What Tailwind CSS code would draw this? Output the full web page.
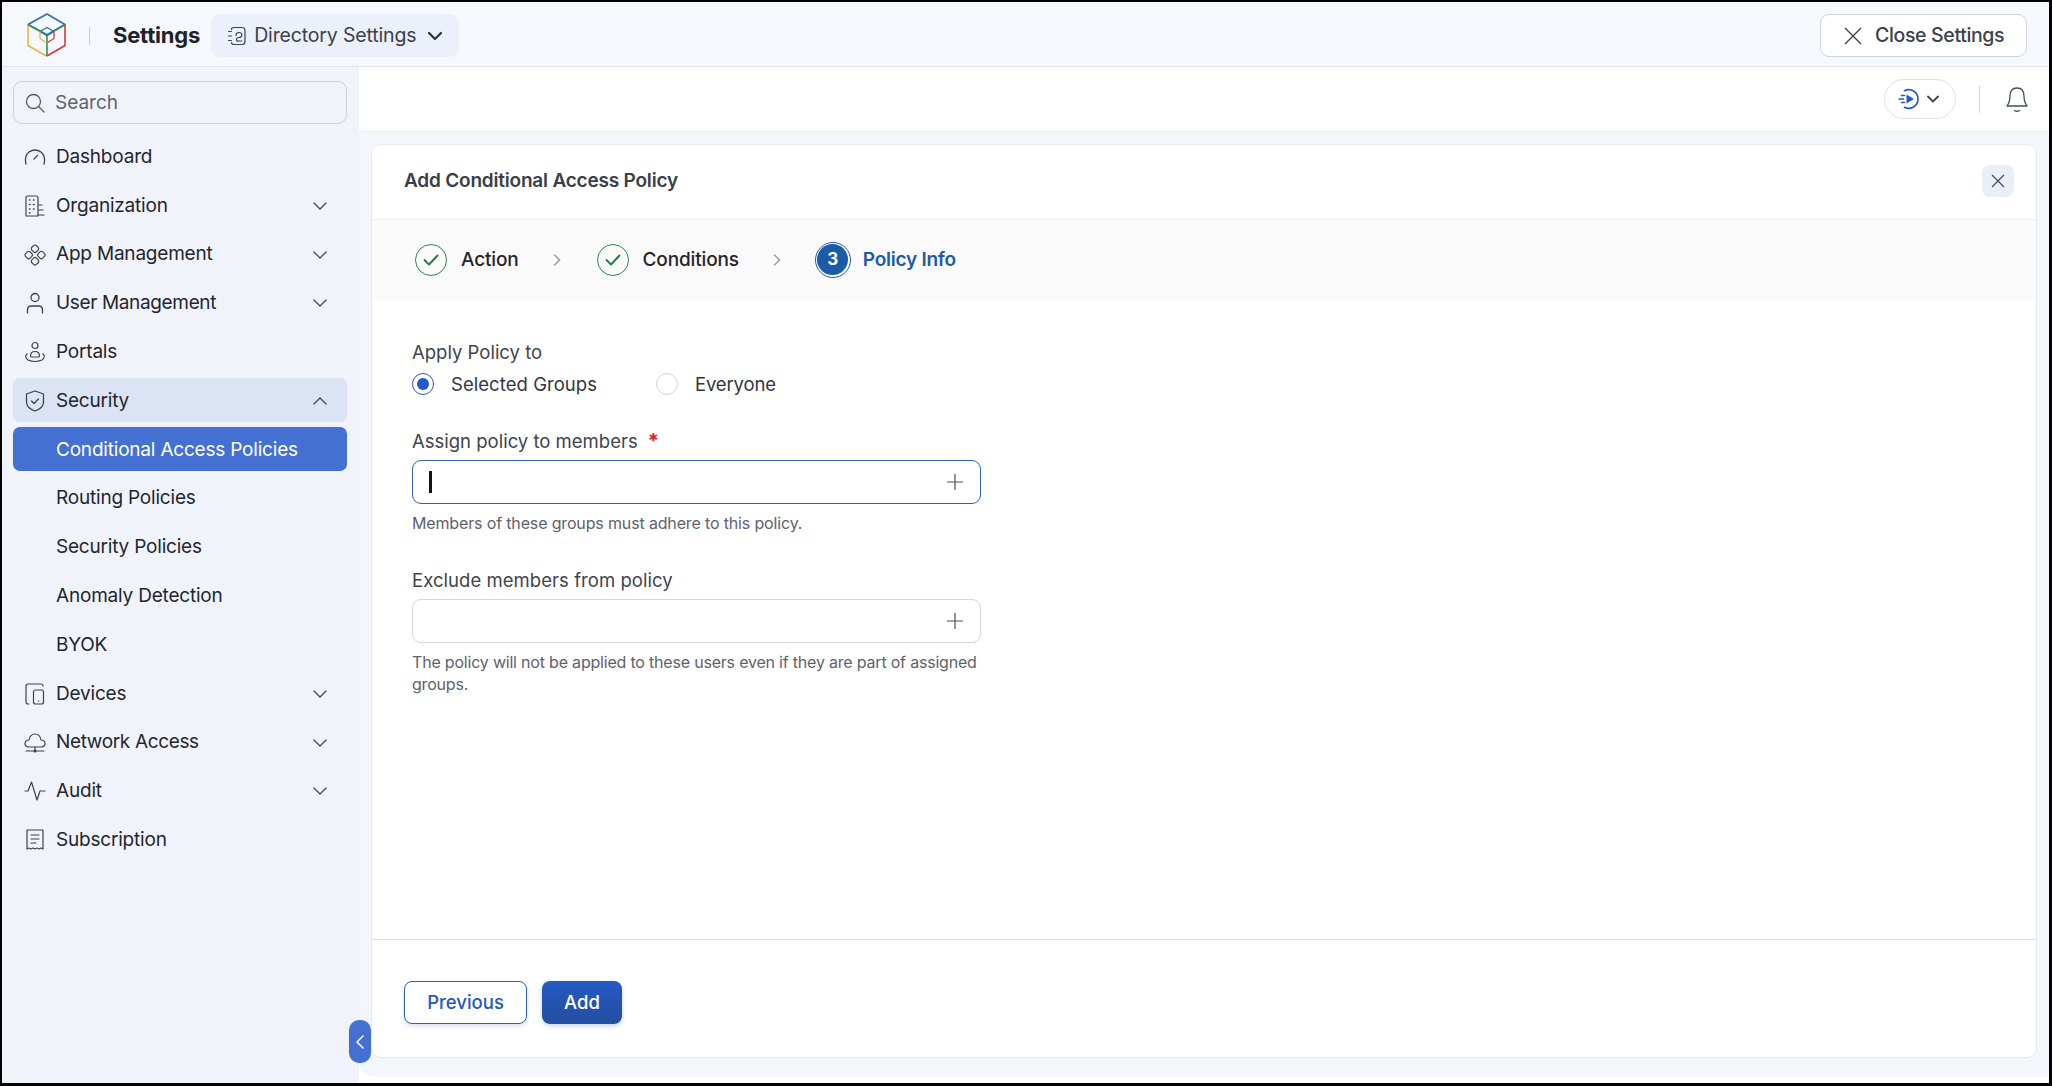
<!DOCTYPE html>
<html>
<head>
<meta charset="utf-8">
<script src="https://cdn.jsdelivr.net/npm/@tailwindcss/browser@4"></script>
</head>
<body class="m-0 overflow-hidden bg-white">
<div class="w-[2052px] h-[1086px] border-t-2 border-l-2 border-r-[3px] border-b-[3px] border-black flex flex-col font-['Inter',sans-serif] text-[#23262e] overflow-hidden relative">

  <!-- header -->
  <header class="h-[65px] shrink-0 bg-[#f5f8fc] border-b border-[#dfe3ea] flex items-center pl-[25px] pr-[22px] pt-[3px]">
    <svg class="w-[40px] h-[44px] shrink-0 -mt-[1px]" viewBox="0 0 40 44" fill="none" stroke-width="1.6" stroke-linejoin="round">
      <path d="M1 11.5 20 1l18 10.5-18 10.5z" stroke="#2f6db5"/>
      <path d="M1 11.5v21L19.5 43" stroke="#eeb244"/>
      <path d="M38 11.5v21L20 43" stroke="#d93a3a"/>
      <path d="M1 11.5 20 22l18-10.5M20 22v21" stroke="#2e9550"/>
      <path d="M13 18.5 20 14.5l7 4-7 4z" stroke="#2f6db5" stroke-width="1.3"/>
      <path d="M13 18.5v7l6.5 4" stroke="#eeb244" stroke-width="1.3"/>
      <path d="M27 18.5v7l-6.5 4" stroke="#d93a3a" stroke-width="1.3"/>
    </svg>
    <div class="w-px h-[18px] bg-[#c9ced6] ml-[22px]"></div>
    <span class="ml-[23px] text-[22px] font-bold text-[#1f2229] tracking-[-0.2px]">Settings</span>
    <div class="ml-[11px] w-[248px] h-[43px] rounded-[9px] bg-[#ebf0fa] flex items-center pl-[16px]">
      <svg class="w-[20px] h-[20px] shrink-0" viewBox="0 0 20 20" fill="none" stroke="#3e434d" stroke-width="1.2" stroke-linecap="round">
        <path d="M4.5 3.5Q4.5 1.5 7 1.5h8q3 0 3 3v11q0 3-3 3H7q-2.500 0-2.500-2"/>
        <path d="M1.500 5.500h3M1.500 10h3M1.500 14.500h3"/>
        <path d="M9 9.500q0-3 3-3t2.800 2.500q0 2.500-3 2.500-2.300 0-2.300 2t2.300 1.500h3"/>
      </svg>
      <span class="ml-[7px] text-[19.500px] text-[#3c414b] tracking-[-0.15px]">Directory Settings</span>
      <svg class="ml-[11px] w-[16px] h-[10px]" viewBox="0 0 16 10" fill="none" stroke="#2e323a" stroke-width="2.200" stroke-linecap="round" stroke-linejoin="round"><path d="M2 2l6 6 6-6"/></svg>
    </div>
    <button class="ml-auto w-[207px] h-[43px] bg-white border border-[#cfd3da] rounded-[9px] flex items-center pl-[23px]">
      <svg class="w-[18px] h-[18px]" viewBox="0 0 18 18" fill="none" stroke="#3a3e46" stroke-width="1.300"><path d="M1 1l16 16M17 1 1 17"/></svg>
      <span class="ml-[13px] text-[19.500px] font-medium text-[#3c414b] tracking-[-0.35px]">Close Settings</span>
    </button>
  </header>

  <div class="flex-1 flex min-h-0 relative">
    <!-- sidebar -->
    <aside class="w-[357px] shrink-0 bg-[#f1f3fa] pl-[11px] pr-[12px] pt-[14px]">
      <div class="h-[43px] rounded-[9px] border border-[#cdd1d9] flex items-center pl-[11px]">
        <svg class="w-[20px] h-[20px]" viewBox="0 0 20 20" fill="none" stroke="#555a64" stroke-width="1.300" stroke-linecap="round"><circle cx="8.500" cy="8.500" r="7"/><path d="M13.800 13.800 19 19"/></svg>
        <span class="ml-[10px] text-[19px] text-[#5f646e] pt-[2px]">Search</span>
      </div>
      <nav class="mt-[10px] flex flex-col gap-[4.800px] text-[19px] tracking-[-0.2px]">
        <a class="h-[44px] flex items-center pl-[11px] pt-[2px]"><svg class="w-[22px] h-[20px] shrink-0" viewBox="0 0 22 20" fill="none" stroke="#3e434d" stroke-width="1.300" stroke-linecap="round"><path d="M2 17Q0 9 5 5q6-4 12 0 5 4 3 12"/><path d="M10 12l3.500-3.500"/></svg><span class="ml-[10px]">Dashboard</span></a>
        <a class="h-[44px] flex items-center pl-[11px] pt-[2px]"><svg class="w-[22px] h-[22px] shrink-0" viewBox="0 0 22 22" fill="none" stroke="#3e434d" stroke-width="1.200" stroke-linecap="round"><path d="M2 21V3q0-2 2-2h8q2 0 2 2v18H3M14 10h4M14 15h5M14 20h6"/><path d="M5.500 5h.5M9.500 5h.5M5.500 9.500h.5M9.500 9.500h.5M5.500 14h.5M9.500 14h.5M5.500 18h.5" stroke-width="1.600"/></svg><span class="ml-[10px]">Organization</span><svg class="ml-auto mr-[20px] w-[14px] h-[8px]" viewBox="0 0 14 8" fill="none" stroke="#43474f" stroke-width="1.300" stroke-linecap="round"><path d="M1 1l6 6 6-6"/></svg></a>
        <a class="h-[44px] flex items-center pl-[11px] pt-[2px]"><svg class="w-[22px] h-[22px] shrink-0" viewBox="0 0 22 22" fill="none" stroke="#3e434d" stroke-width="1.200"><rect x="7.800" y="1.500" width="6.400" height="6.400" rx="2" transform="rotate(45 11 4.700)"/><rect x="7.800" y="14.100" width="6.400" height="6.400" rx="2" transform="rotate(45 11 17.300)"/><rect x="1.500" y="7.800" width="6.400" height="6.400" rx="2" transform="rotate(45 4.700 11)"/><rect x="14.100" y="7.800" width="6.400" height="6.400" rx="2" transform="rotate(45 17.300 11)"/></svg><span class="ml-[10px]">App Management</span><svg class="ml-auto mr-[20px] w-[14px] h-[8px]" viewBox="0 0 14 8" fill="none" stroke="#43474f" stroke-width="1.300" stroke-linecap="round"><path d="M1 1l6 6 6-6"/></svg></a>
        <a class="h-[44px] flex items-center pl-[11px] pt-[2px]"><svg class="w-[22px] h-[22px] shrink-0" viewBox="0 0 22 22" fill="none" stroke="#3e434d" stroke-width="1.300" stroke-linecap="round"><circle cx="11" cy="5.500" r="4"/><path d="M3.500 21v-3q0-4 4-4h7q4 0 4 4v3"/></svg><span class="ml-[10px] tracking-[-0.35px]">User Management</span><svg class="ml-auto mr-[20px] w-[14px] h-[8px]" viewBox="0 0 14 8" fill="none" stroke="#43474f" stroke-width="1.300" stroke-linecap="round"><path d="M1 1l6 6 6-6"/></svg></a>
        <a class="h-[44px] flex items-center pl-[11px] pt-[2px]"><svg class="w-[22px] h-[22px] shrink-0" viewBox="0 0 22 22" fill="none" stroke="#3e434d" stroke-width="1.200" stroke-linecap="round"><circle cx="11" cy="4.500" r="3"/><path d="M6.500 15q0-4.500 4.500-4.500t4.500 4.500q0 1-1 1h-7q-1 0-1-1z"/><path d="M3 13q-3 3 1 6 7 3 14 0 4-3 1-6"/></svg><span class="ml-[10px]">Portals</span></a>
        <a class="h-[44px] flex items-center pl-[11px] pt-[2px] bg-[#dbe3f5] rounded-[7px]"><svg class="w-[22px] h-[22px] shrink-0" viewBox="0 0 22 22" fill="none" stroke="#3e434d" stroke-width="1.300" stroke-linecap="round" stroke-linejoin="round"><path d="M11 1l8.500 3v8q0 6-8.500 9-8.500-3-8.500-9V4z"/><path d="M7.500 11l2.500 2.500 4.500-4.500"/></svg><span class="ml-[10px]">Security</span><svg class="ml-auto mr-[20px] w-[14px] h-[8px]" viewBox="0 0 14 8" fill="none" stroke="#43474f" stroke-width="1.300" stroke-linecap="round"><path d="M1 7l6-6 6 6"/></svg></a>
        <a class="h-[44px] flex items-center pl-[43px] pt-[2px] bg-[#4471d1] text-white rounded-[7px]">Conditional Access Policies</a>
        <a class="h-[44px] flex items-center pl-[43px] pt-[2px]">Routing Policies</a>
        <a class="h-[44px] flex items-center pl-[43px] pt-[2px]">Security Policies</a>
        <a class="h-[44px] flex items-center pl-[43px] pt-[2px]">Anomaly Detection</a>
        <a class="h-[44px] flex items-center pl-[43px] pt-[2px]">BYOK</a>
        <a class="h-[44px] flex items-center pl-[11px] pt-[2px]"><svg class="w-[22px] h-[22px] shrink-0" viewBox="0 0 22 22" fill="none" stroke="#3e434d" stroke-width="1.200" stroke-linecap="round"><path d="M5 21H4q-2 0-2-2V3q0-2 2-2h13q2 0 2 2"/><rect x="9.500" y="7" width="10" height="14" rx="2"/><path d="M14.300 18h.4"/></svg><span class="ml-[10px]">Devices</span><svg class="ml-auto mr-[20px] w-[14px] h-[8px]" viewBox="0 0 14 8" fill="none" stroke="#43474f" stroke-width="1.300" stroke-linecap="round"><path d="M1 1l6 6 6-6"/></svg></a>
        <a class="h-[44px] flex items-center pl-[11px] pt-[2px]"><svg class="w-[22px] h-[22px] shrink-0" viewBox="0 0 22 22" fill="none" stroke="#3e434d" stroke-width="1.200" stroke-linecap="round" stroke-linejoin="round"><path d="M5 15q-4.500-.5-4-4 .5-3 4-3 1-6 6-6t6 6q3.500 0 4 3 .5 3.500-4 4z"/><path d="M11 15v4M2 19h18"/><circle cx="11" cy="19" r="1" fill="#3e434d"/></svg><span class="ml-[10px] tracking-[-0.35px]">Network Access</span><svg class="ml-auto mr-[20px] w-[14px] h-[8px]" viewBox="0 0 14 8" fill="none" stroke="#43474f" stroke-width="1.300" stroke-linecap="round"><path d="M1 1l6 6 6-6"/></svg></a>
        <a class="h-[44px] flex items-center pl-[11px] pt-[2px]"><svg class="w-[22px] h-[22px] shrink-0" viewBox="0 0 22 22" fill="none" stroke="#3e434d" stroke-width="1.200" stroke-linecap="round" stroke-linejoin="round"><path d="M1 11h3l3.500-9 5.500 18 3-9h5"/></svg><span class="ml-[10px]">Audit</span><svg class="ml-auto mr-[20px] w-[14px] h-[8px]" viewBox="0 0 14 8" fill="none" stroke="#43474f" stroke-width="1.300" stroke-linecap="round"><path d="M1 1l6 6 6-6"/></svg></a>
        <a class="h-[44px] flex items-center pl-[11px] pt-[2px]"><svg class="w-[22px] h-[22px] shrink-0" viewBox="0 0 22 22" fill="none" stroke="#3e434d" stroke-width="1.200" stroke-linecap="round" stroke-linejoin="round"><path d="M3 1h16v19l-2-1-2 1-2-1-2 1-2-1-2 1-2-1-2 1z"/><path d="M7 6h8M7 10h8M7 14h5"/></svg><span class="ml-[10px]">Subscription</span></a>
      </nav>
    </aside>

    <!-- main -->
    <main class="flex-1 min-w-0 bg-white flex flex-col">
      <div class="h-[64px] shrink-0 flex items-center">
        <div class="ml-auto w-[72px] h-[40px] rounded-full border border-[#dfe2e8] flex items-center pl-[13px] mr-[23px]">
          <svg class="w-[22px] h-[22px] shrink-0" viewBox="0 0 22 22" fill="none" stroke="#2359c4" stroke-width="1.700" stroke-linecap="round"><path d="M6.500 2.700A9.300 9.300 0 1 1 6.500 19.300"/><path d="M8.500 6.500 16 11l-7.500 4.500z" fill="#2359c4" stroke="none"/><path d="M3.500 7.500h3M1 11h4.500M3.500 14.500h3" stroke-width="1.500"/></svg>
          <svg class="ml-[7px] w-[12px] h-[8px]" viewBox="0 0 12 8" fill="none" stroke="#3e434d" stroke-width="1.800" stroke-linecap="round" stroke-linejoin="round"><path d="M1 1.500l5 5 5-5"/></svg>
        </div>
        <div class="w-px h-[27px] bg-[#d1d5dc]"></div>
        <svg class="ml-[26px] mr-[21px] mt-[1px] w-[22px] h-[26px]" viewBox="0 0 22 26" fill="none" stroke="#4a4e57" stroke-width="1.300" stroke-linecap="round" stroke-linejoin="round"><path d="M11 1q-7 0-7 8 0 6-3 10h20q-3-4-3-10 0-8-7-8z"/><path d="M8.500 23.500q2.500 1.500 5 0"/></svg>
      </div>
      <div class="flex-1 min-h-0 bg-[#f3f7fc] border-t border-[#e8ecf2] rounded-bl-[16px] pl-[12px] pr-[12px] pt-[12px] pb-[19px] mb-[6px]">
        <section class="h-full bg-white border border-[#e6eaf1] rounded-[10px] flex flex-col overflow-hidden">
          <div class="h-[75px] shrink-0 flex items-center justify-between pl-[32px] pr-[22px] pb-[2px] border-b border-[#eef0f3]">
            <h1 class="text-[19px] font-semibold text-[#3a3e47] tracking-[-0.2px]">Add Conditional Access Policy</h1>
            <button class="w-[32px] h-[32px] rounded-[8px] bg-[#e9eef9] flex items-center justify-center">
              <svg class="w-[14px] h-[14px]" viewBox="0 0 14 14" fill="none" stroke="#484c55" stroke-width="1.200"><path d="M1 1l12 12M13 1 1 13"/></svg>
            </button>
          </div>
          <div class="h-[79px] shrink-0 bg-[#fafafa] flex items-center pl-[43px]">
            <div class="w-[32px] h-[32px] rounded-full border-[1.500px] border-[#2c8a5a] flex items-center justify-center"><svg class="w-[16px] h-[12px]" viewBox="0 0 16 12" fill="none" stroke="#1f7d4d" stroke-width="1.900" stroke-linecap="round" stroke-linejoin="round"><path d="M1.500 6l4.500 4.500 8.500-9"/></svg></div>
            <span class="ml-[14px] text-[19px] font-medium text-[#22252c] tracking-[-0.15px] pt-[2px]">Action</span>
            <svg class="ml-[34px] w-[8px] h-[12px]" viewBox="0 0 8 12" fill="none" stroke="#9a9da3" stroke-width="1.500" stroke-linecap="round"><path d="M1.500 1l5 5-5 5"/></svg>
            <div class="ml-[36px] w-[32px] h-[32px] rounded-full border-[1.500px] border-[#2c8a5a] flex items-center justify-center"><svg class="w-[16px] h-[12px]" viewBox="0 0 16 12" fill="none" stroke="#1f7d4d" stroke-width="1.900" stroke-linecap="round" stroke-linejoin="round"><path d="M1.500 6l4.500 4.500 8.500-9"/></svg></div>
            <span class="ml-[14px] text-[19px] font-medium text-[#22252c] tracking-[-0.15px] pt-[2px]">Conditions</span>
            <svg class="ml-[34px] w-[8px] h-[12px]" viewBox="0 0 8 12" fill="none" stroke="#9a9da3" stroke-width="1.500" stroke-linecap="round"><path d="M1.500 1l5 5-5 5"/></svg>
            <div class="ml-[34px] w-[36px] h-[36px] rounded-full border-[1.500px] border-[#1d5aa8] bg-white p-[1.500px]"><div class="w-full h-full rounded-full bg-[#1d5aa8] text-white text-[17px] font-bold flex items-center justify-center">3</div></div>
            <span class="ml-[12px] text-[19px] font-semibold text-[#1d5aa8] tracking-[-0.25px] pt-[2px]">Policy Info</span>
          </div>
          <div class="flex-1 min-h-0 pl-[40px] pt-[41px] text-[18.500px] text-[#3f434c]">
            <div class="h-[24px] leading-[24px]">Apply Policy to</div>
            <div class="mt-[8px] h-[24px] flex items-center text-[#33363e]">
              <span class="w-[22px] h-[22px] rounded-full border-[1.500px] border-[#2359c4] flex items-center justify-center"><span class="w-[12px] h-[12px] rounded-full bg-[#2359c4]"></span></span>
              <span class="ml-[17px] w-[205px] pt-[2px] tracking-[0.05px]">Selected Groups</span>
              <span class="w-[22px] h-[22px] rounded-full border border-[#cfd2d8] bg-white"></span>
              <span class="ml-[17px] pt-[2px] tracking-[-0.15px]">Everyone</span>
            </div>
            <div class="mt-[33px] h-[24px] leading-[24px]">Assign policy to members<span class="ml-[10px] text-[#dc2626] font-bold text-[20px]">*</span></div>
            <div class="mt-[7px] w-[569px] h-[44px] rounded-[9px] border-[1.500px] border-[#2f5fb3] flex items-center pl-[16px] pr-[17px] justify-between">
              <span class="w-[3px] h-[22px] bg-[#111318]"></span>
              <svg class="w-[16px] h-[16px]" viewBox="0 0 16 16" fill="none" stroke="#4a4e57" stroke-width="1.200"><path d="M8 0v16M0 8h16"/></svg>
            </div>
            <p class="mt-[8px] text-[16px] leading-[22px] tracking-[-0.15px] text-[#5e626b]">Members of these groups must adhere to this policy.</p>
            <div class="mt-[34px] h-[24px] leading-[24px] tracking-[0.05px]">Exclude members from policy</div>
            <div class="mt-[7px] w-[569px] h-[44px] rounded-[9px] border-[1.500px] border-[#d4d6da] flex items-center pl-[15px] pr-[17px] justify-end">
              <svg class="w-[16px] h-[16px]" viewBox="0 0 16 16" fill="none" stroke="#4a4e57" stroke-width="1.200"><path d="M8 0v16M0 8h16"/></svg>
            </div>
            <p class="mt-[8px] w-[569px] text-[16px] leading-[22px] tracking-[-0.2px] text-[#5e626b]">The policy will not be applied to these users even if they are part of assigned groups.</p>
          </div>
          <div class="h-[118px] shrink-0 border-t border-[#dde0e5] flex items-start pl-[32px] pt-[41px]">
            <button class="w-[123px] h-[43px] rounded-[8px] bg-white border-[1.500px] border-[#2f5fb3] text-[18.500px] font-medium text-[#2459ba] shadow-[0_2px_5px_rgba(40,80,160,0.18)]">Previous</button>
            <button class="ml-[15px] w-[80px] h-[43px] rounded-[8px] bg-gradient-to-b from-[#2559c4] to-[#234f9f] text-[18.500px] font-medium text-white shadow-[0_2px_5px_rgba(40,80,160,0.25)]">Add</button>
          </div>
        </section>
      </div>
    </main>

    <button class="absolute left-[347px] top-[953px] w-[22px] h-[43px] rounded-[10px] bg-[#4471d1] flex items-center justify-center">
      <svg class="w-[8px] h-[14px]" viewBox="0 0 8 14" fill="none" stroke="#fff" stroke-width="1.500" stroke-linecap="round" stroke-linejoin="round"><path d="M7 1 1 7l6 6"/></svg>
    </button>
  </div>
</div>
</body>
</html>
